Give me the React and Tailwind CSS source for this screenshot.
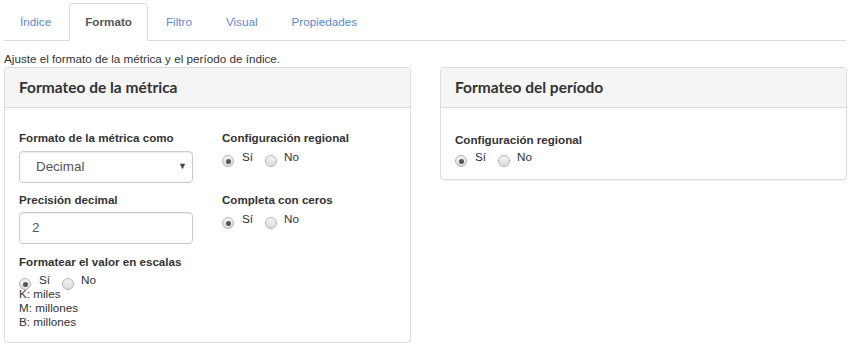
const tabs = ['Índice', 'Formato', 'Filtro', 'Visual', 'Propiedades'];

function Radio({ checked }) {
  return (
    <span className="mt-[5px] grid h-[12px] w-[12px] shrink-0 place-items-center rounded-full border border-[#b5b5b5] bg-gradient-to-b from-[#f4f4f4] to-[#dcdcdc]">
      {checked && <span className="h-[5px] w-[5px] rounded-full bg-[#555]" />}
    </span>
  );
}

function YesNo() {
  return (
    <div className="flex items-start leading-[14px] text-[#333]">
      <Radio checked />
      <span className="ml-[8px]">Sí</span>
      <span className="ml-[12px]">
        <Radio />
      </span>
      <span className="ml-[7px]">No</span>
    </div>
  );
}

function Label({ children }) {
  return <div className="text-[11.6px] font-bold leading-[17px] text-[#333]">{children}</div>;
}

function Panel({ title, children }) {
  return (
    <div className="rounded-[4px] border border-[#dcdcdc] bg-white shadow-[0_1px_1px_rgba(0,0,0,0.05)]">
      <div className="flex h-[40px] items-center rounded-t-[4px] border-b border-[#dcdcdc] bg-[#f5f5f5] px-[14px] font-['Lato',sans-serif] text-[15.5px] font-bold text-[#333]">
        {title}
      </div>
      {children}
    </div>
  );
}

export default function App() {
  return (
    <div className="px-[4px] pt-[3px] font-['Liberation_Sans',Arial,sans-serif] text-[11.7px] text-[#333]">
      {/* tabs */}
      <ul className="flex border-b border-[#dcdcdc]">
        {tabs.map((t) => (
          <li
            key={t}
            className={`-mb-px mr-[2px] flex h-[38px] items-center rounded-t-[4px] border px-[15px] ${
              t === 'Formato'
                ? 'border-[#dcdcdc] border-b-white bg-white font-bold text-[#555]'
                : 'border-transparent text-[#5b8ad0]'
            }`}
          >
            {t}
          </li>
        ))}
      </ul>

      <p className="mt-[9px] leading-[17px]">Ajuste el formato de la métrica y el período de índice.</p>

      <div className="grid grid-cols-[407px_407px] items-start gap-[29px]">
        <Panel title="Formateo de la métrica">
          <div className="px-[14px] pb-[13px] pt-[21px]">
            <div className="grid grid-cols-[174px_1fr] gap-x-[29px] gap-y-[8px]">
              <div>
                <Label>Formato de la métrica como</Label>
                <div className="mt-[5px] flex h-[32px] items-center justify-between rounded-[4px] border border-[#ccc] pl-[16px] pr-[5px] text-[13.4px] text-[#555] shadow-[inset_0_1px_1px_rgba(0,0,0,0.075)]">
                  <span>Decimal</span>
                  <span className="text-[9px] text-[#444]">▼</span>
                </div>
              </div>
              <div>
                <Label>Configuración regional</Label>
                <div className="mt-[4px]">
                  <YesNo />
                </div>
              </div>
              <div>
                <Label>Precisión decimal</Label>
                <div className="mt-[4px] flex h-[32px] items-center rounded-[4px] border border-[#ccc] px-[12px] text-[13.4px] text-[#555] shadow-[inset_0_1px_1px_rgba(0,0,0,0.075)]">
                  2
                </div>
              </div>
              <div>
                <Label>Completa con ceros</Label>
                <div className="mt-[4px]">
                  <YesNo />
                </div>
              </div>
            </div>
            <div className="mt-[9px]">
              <Label>Formatear el valor en escalas</Label>
              <div className="mt-[3px]">
                <YesNo />
              </div>
              <div className="-mt-[3px] leading-[14px]">
                <div>K: miles</div>
                <div>M: millones</div>
                <div>B: millones</div>
              </div>
            </div>
          </div>
        </Panel>

        <Panel title="Formateo del período">
          <div className="px-[14px] pb-[12px] pt-[23px]">
            <Label>Configuración regional</Label>
            <div className="mt-[2px]">
              <YesNo />
            </div>
          </div>
        </Panel>
      </div>
    </div>
  );
}
